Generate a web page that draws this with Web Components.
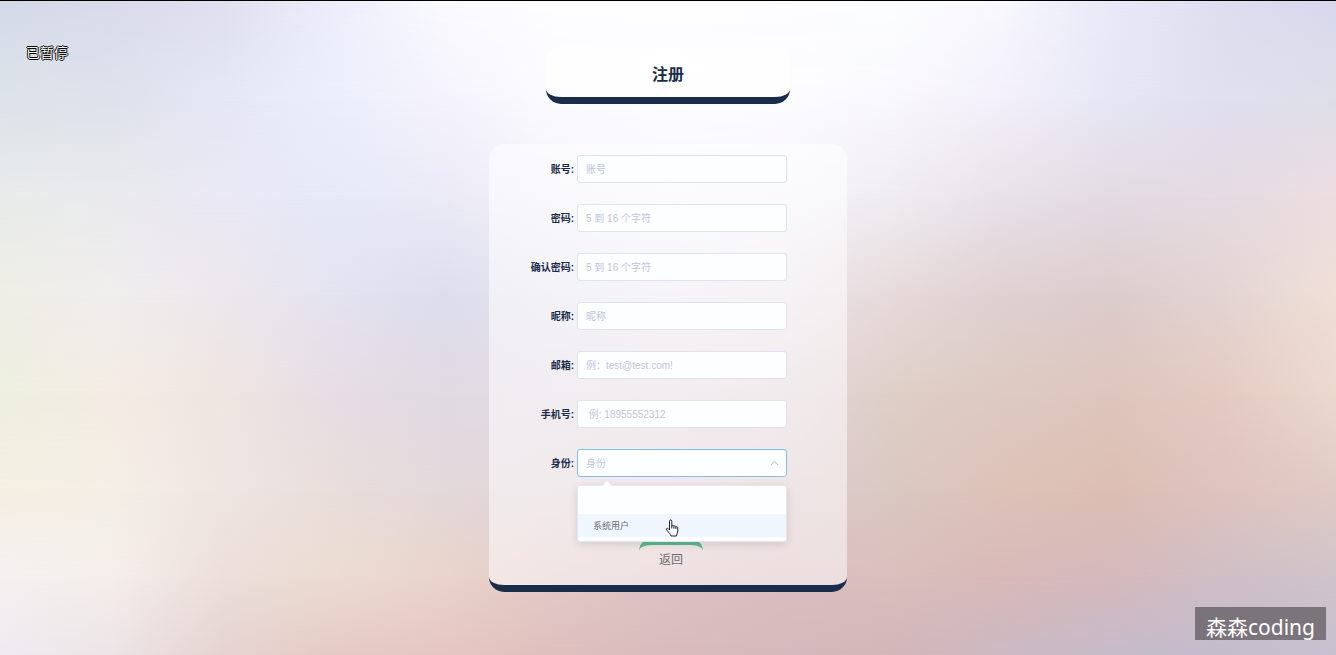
<!DOCTYPE html>
<html lang="zh-CN">
<head>
<meta charset="utf-8">
<title>注册</title>
<style>
html,body{margin:0;min-height:100vh}
body{font-family:"Liberation Sans","Noto Sans CJK SC",sans-serif;color:#1b2b4a}
</style>
</head>
<body>
<register-page>
  <page-title>注册</page-title>
  <register-panel>
    <form-field label="账号" placeholder="账号"></form-field>
    <form-field label="密码" placeholder="5 到 16 个字符" type="password"></form-field>
    <form-field label="确认密码" placeholder="5 到 16 个字符" type="password"></form-field>
    <form-field label="昵称" placeholder="昵称"></form-field>
    <form-field label="邮箱" placeholder="例：test@test.com!"></form-field>
    <form-field label="手机号" placeholder=" 例: 18955552312"></form-field>
    <role-field label="身份" placeholder="身份"><span>系统用户</span></role-field>
    <back-button slot="action">返回</back-button>
  </register-panel>
  <play-status slot="status">已暂停</play-status>
  <author-mark slot="mark">森森coding</author-mark>
</register-page>
<script>
const define = (name, html, setup) => customElements.define(name, class extends HTMLElement {
  connectedCallback() {
    if (this.shadowRoot) return;
    const root = this.attachShadow({mode: 'open'});
    const t = document.createElement('template');
    t.innerHTML = html;
    root.append(t.content.cloneNode(true));
    if (setup) setup(this, root);
  }
});

// Bilinear colour mesh: one horizontal gradient per row, each faded into the next.
define('color-mesh', `<style>
  :host{display:grid;position:absolute;inset:0;z-index:-1;overflow:hidden}
  div{grid-area:1/1}
</style>`, (host, root) => {
  const rows = [
    [0,   'd4dae8 dadbea e0e0f0 eeeefb fafaff fefeff fefeff fdfdff fdfefe f8f8fe e9e9f8 dedef0 d8d8ee'],
    [15,  'dde3e9 dfe2ec e5e7f4 ebeefb f5f3fd fbfbff fdfdff fdfcff f9f8fc f3f0fb e6e6f4 e0dfef dfdfe8'],
    [30,  'e8ebea eaeaec eae8f5 e6e9f7 ebeaf6 f3f3f9 f7f6fb f5f4fa efedf1 e8e2e8 e3dbe2 e5dbe1 ecdde1'],
    [45,  'efeee6 f0eeee ece8ec e4e3f0 dddded e6e5ef ece9f0 ebe5eb e7dadb dfd0d2 dccccd e4d4d3 f0dfd7'],
    [60,  'edf0e1 f4ece4 efe5e1 e7dde4 e0dae1 e3dbe3 e6dae1 e4d6dc dfcfc8 ddcac1 dec6bd e4cbc2 ebd9ce'],
    [75,  'f5efe3 f4efe6 efe5e2 e9dedb e3d8db e3d5d9 e2d1d5 dfcbce d9c8c2 dec2b8 dcbeb3 dfc3bf e0cac6'],
    [88,  'f5f1f1 f5eeeb ecdfdb ecdcd2 e9d4ca e3c9c8 dec2c3 dbbec0 dabfbd d8b9b9 d5b9bd cfbfc6 cfc4c9'],
    [100, 'efeaf0 ece4e6 e5d3d1 e4cac4 e5c6c0 debfbe d9bbbc d6b9bc d2b6b9 ccb9c2 c6bbc9 c3bccc c6c1d0']
  ];
  rows.forEach(([y, colors], i) => {
    const d = document.createElement('div');
    d.style.background = 'linear-gradient(90deg,' + colors.split(' ').map(c => '#' + c) + ')';
    if (i) d.style.maskImage = 'linear-gradient(transparent ' + rows[i - 1][0] + '%,#000 ' + y + '%)';
    root.append(d);
  });
});

define('register-page', `<style>
  :host{display:flex;flex-direction:column;align-items:center;gap:40px;position:relative;isolation:isolate;
    box-sizing:border-box;min-height:100vh;padding:46px 16px 48px;border-top:1px solid #000}
</style>
<color-mesh></color-mesh>
<slot></slot><slot name="status"></slot><slot name="mark"></slot>`);

define('page-title', `<style>
  :host{display:block;box-sizing:border-box;width:100%;max-width:244px;padding:15px 0 9px;
    background:#ffffff80;border-bottom:7px solid #1b2b4a;border-radius:15px}
  h1{margin:0;text-align:center;font-size:16px;line-height:26px}
</style><h1><slot></slot></h1>`);

define('register-panel', `<style>
  :host{display:block;box-sizing:border-box;width:100%;max-width:358px;
    background:#ffffff80;border-bottom:7px solid #1b2b4a;border-radius:15px}
  form{display:flex;flex-direction:column;gap:21px;padding:11px 60px 9px 16px}
</style>
<form><slot></slot></form><slot name="action"></slot>`);

const fieldStyle = `
  :host{display:grid;grid-template-columns:1fr 210px;gap:3px;height:28px;position:relative}
  label{text-align:right;font-size:10px;line-height:30px;font-weight:bold;white-space:nowrap}
  input{box-sizing:border-box;width:100%;height:28px;padding:0 8px;border:1px solid #dfe2ef;border-radius:3px;
    background:#fdfeff;font:10px/26px "Liberation Sans","Noto Sans CJK SC",sans-serif;outline:0}
  input::placeholder{color:#c0c6da;opacity:1}`;
const setupField = (host, root) => {
  root.querySelector('label').append(host.getAttribute('label') + ':');
  const input = root.querySelector('input');
  input.placeholder = host.getAttribute('placeholder');
  input.type = host.getAttribute('type') || 'text';
};
define('form-field', `<style>${fieldStyle}</style><label for="field"></label><input id="field">`, setupField);

define('role-field', `<style>${fieldStyle}
  :host{z-index:1}
  .combo{position:relative}
  input{display:block;border-color:#82c0ea}
  .caret{position:absolute;right:8px;top:10px;width:9px;height:8px}
  .menu{position:absolute;top:36px;left:0;right:0;box-sizing:border-box;padding:28px 0 4px;border:1px solid #e4e7f0;
    border-radius:3px;background:#fdfeff;box-shadow:0 2px 8px #0000001f}
  .menu::before{content:"";position:absolute;top:-5px;left:24px;border:5px solid transparent;border-top:0;border-bottom-color:#fdfeff}
  .option{padding:0 15px;background:#f0f6fe;color:#686c76;font:9px/23px "Noto Sans CJK SC",sans-serif}
  .hand{position:absolute;left:87px;top:33px;width:14px;height:18px}
</style>
<label for="field"></label>
<div class="combo">
  <input id="field" role="combobox" aria-expanded="true" aria-controls="list" readonly>
  <svg class="caret" viewBox="0 0 9 8"><path d="M1 6l3.500-4L8 6" fill="none" stroke="#bcc2d2"/></svg>
  <div class="menu" id="list" role="listbox">
    <div class="option" role="option" aria-selected="false"><slot></slot></div>
    <svg class="hand" viewBox="0 0 14 18"><path d="M4.500 11V2.200c0-1.800 2.300-1.800 2.300 0V7c.3-1 2-.8 2.100.4.4-.8 1.900-.6 2 .6.5-.7 1.900-.4 1.900.9V12c0 2-1.200 3-1.400 5H6c-.3-1.800-2.400-3.500-4.300-6-.8-1.300.6-2.400 1.600-1.300z" fill="#fff" stroke="#20232b" stroke-linejoin="round"/><path d="M6.800 7v2.500M8.900 7.400v2.300M10.900 8v2" stroke="#20232b" fill="none"/></svg>
  </div>
</div>`, setupField);

define('back-button', `<style>
  :host{display:flex;justify-content:center;padding:53px 0 10px 6px}
  button{box-sizing:border-box;width:64px;height:36px;padding:0;border:0;border-top:6px solid #5cb88a;border-radius:12px;
    background:none;color:#6f6c72;font:12px/28px "Liberation Sans","Noto Sans CJK SC",sans-serif}
</style><button type="button"><slot></slot></button>`);

define('play-status', `<style>
  :host{position:absolute;left:26px;top:41px;font:14px/20px "Noto Sans CJK SC",sans-serif;color:#fff;
    text-shadow:1px 0 #000,-1px 0 #000,0 1px #000,0 -1px #000}
</style><slot></slot>`);

define('author-mark', `<style>
  :host{position:absolute;right:10px;bottom:15px;box-sizing:border-box;height:33px;padding:4px 11px 0;
    background:#6f686fdd;color:#fff;font:21px/33px "Noto Sans","Noto Sans CJK SC",sans-serif}
</style><slot></slot>`);
</script>
</body>
</html>
